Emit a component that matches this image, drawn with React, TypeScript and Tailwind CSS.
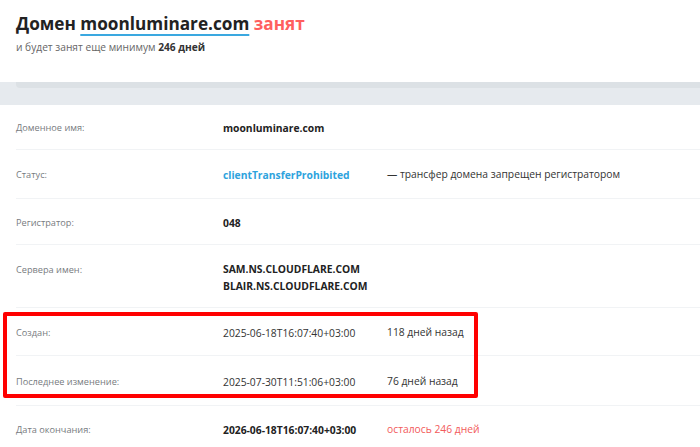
import React from 'react';

type Row = {
  label: string;
  values: React.ReactNode;
  extra?: React.ReactNode;
  h: string;
};

function InfoRow({ label, values, extra, h }: Row) {
  return (
    <div className={`flex items-center border-b border-[#f1f3f5] leading-[14px] ${h}`}>
      <div className="w-[207px] shrink-0 pt-[2px] text-[9.2px] text-[#777b80]">{label}</div>
      <div className="w-[164px] shrink-0">{values}</div>
      {extra && <div className="text-[10.3px]">{extra}</div>}
    </div>
  );
}

export default function App() {
  return (
    <div className="w-[700px] h-[447px] overflow-hidden bg-white font-['Open_Sans',sans-serif]">
      {/* header */}
      <div className="h-[82px] px-4 pt-[11px]">
        <h1 className="text-[17.2px] font-bold leading-[26px] text-[#222]">
          Домен{' '}
          <span className="underline decoration-[#3aa8e0] decoration-[1.5px] underline-offset-[4px]">moonluminare.com</span>{' '}
          <span className="text-[#ff5f5f]">занят</span>
        </h1>
        <p className="mt-[3px] text-[10.2px] text-[#666]">
          и будет занят еще минимум <span className="font-bold text-[#333]">246 дней</span>
        </p>
      </div>

      <div className="h-[23px] bg-[#e6eaee]">
        <div className="ml-4 h-[6px] rounded-bl-[4px] bg-[#dce1e5]" />
      </div>

      <div className="pl-4">
        <InfoRow
          h="h-[45px]"
          label="Доменное имя:"
          values={<span className="text-[10.3px] font-bold text-[#222]">moonluminare.com</span>}
        />
        <InfoRow
          h="h-[49px]"
          label="Статус:"
          values={<span className="text-[10.3px] font-bold text-[#2ea3dd]">clientTransferProhibited</span>}
          extra={<span className="text-[#333]">— трансфер домена запрещен регистратором</span>}
        />
        <InfoRow
          h="h-[46px]"
          label="Регистратор:"
          values={<span className="text-[10.3px] font-bold text-[#222]">048</span>}
        />
        <div className="flex h-[63px] items-start border-b border-[#f1f3f5] pt-[16px] leading-[14px]">
          <div className="w-[207px] shrink-0 pt-[2px] text-[9.2px] text-[#777b80]">Сервера имен:</div>
          <div className="text-[10.3px] font-bold leading-[17px] text-[#222]">
            <div>SAM.NS.CLOUDFLARE.COM</div>
            <div>BLAIR.NS.CLOUDFLARE.COM</div>
          </div>
        </div>

        <div className="relative">
          <InfoRow
            h="h-[48px]"
            label="Создан:"
            values={<span className="text-[10.3px] text-[#333]">2025-06-18T16:07:40+03:00</span>}
            extra={<span className="text-[#333]">118 дней назад</span>}
          />
          <InfoRow
            h="h-[50px]"
            label="Последнее изменение:"
            values={<span className="text-[10.3px] text-[#333]">2025-07-30T11:51:06+03:00</span>}
            extra={<span className="text-[#333]">76 дней назад</span>}
          />
          <div className="pointer-events-none absolute left-[-13px] top-[4px] h-[86px] w-[475px] rounded-[2px] border-[4px] border-[#ff0000]" />
        </div>

        <InfoRow
          h="h-[46px]"
          label="Дата окончания:"
          values={<span className="text-[10.3px] font-bold text-[#222]">2026-06-18T16:07:40+03:00</span>}
          extra={<span className="text-[#f25a5a]">осталось 246 дней</span>}
        />
      </div>
    </div>
  );
}
